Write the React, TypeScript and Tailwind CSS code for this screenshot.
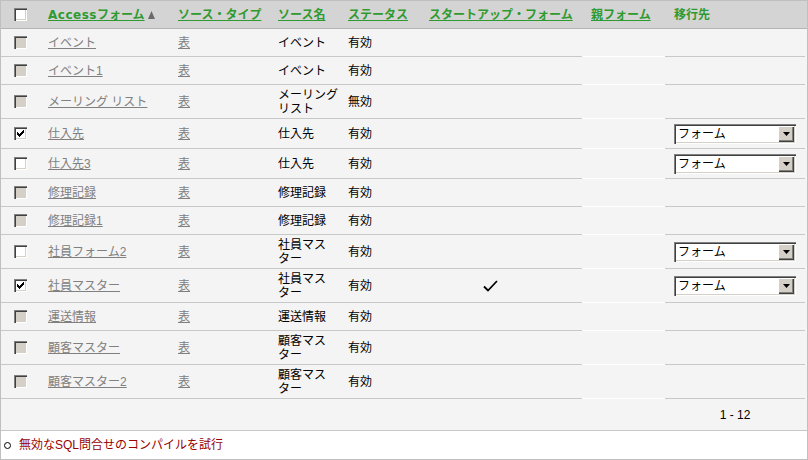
import React from 'react';

type Box = 'disabled' | 'off' | 'on';

type Row = {
  name: string;
  source: React.ReactNode;
  status: string;
  box: Box;
  h: string;
  select?: boolean;
  startup?: boolean;
};

const rows: Row[] = [
  { name: 'イベント', source: 'イベント', status: '有効', box: 'disabled', h: 'h-[28px]' },
  { name: 'イベント1', source: 'イベント', status: '有効', box: 'disabled', h: 'h-[28px]' },
  { name: 'メーリング リスト', source: <>メーリング<br />リスト</>, status: '無効', box: 'disabled', h: 'h-[34px]' },
  { name: '仕入先', source: '仕入先', status: '有効', box: 'on', h: 'h-[30px]', select: true },
  { name: '仕入先3', source: '仕入先', status: '有効', box: 'off', h: 'h-[30px]', select: true },
  { name: '修理記録', source: '修理記録', status: '有効', box: 'disabled', h: 'h-[28px]' },
  { name: '修理記録1', source: '修理記録', status: '有効', box: 'disabled', h: 'h-[28px]' },
  { name: '社員フォーム2', source: <>社員マス<br />ター</>, status: '有効', box: 'off', h: 'h-[34px]', select: true },
  { name: '社員マスター', source: <>社員マス<br />ター</>, status: '有効', box: 'on', h: 'h-[34px]', select: true, startup: true },
  { name: '運送情報', source: '運送情報', status: '有効', box: 'disabled', h: 'h-[28px]' },
  { name: '顧客マスター', source: <>顧客マス<br />ター</>, status: '有効', box: 'disabled', h: 'h-[34px]' },
  { name: '顧客マスター2', source: <>顧客マス<br />ター</>, status: '有効', box: 'disabled', h: 'h-[34px]' },
];

function CheckBox({ state }: { state: Box }) {
  return (
    <span
      className={`relative block w-[13px] h-[13px] shadow-[inset_1px_1px_0_#808080,inset_2px_2px_0_#404040,inset_-1px_-1px_0_#ffffff,inset_-2px_-2px_0_#d4d0c8] ${
        state === 'disabled' ? 'bg-[#d4d0c8]' : 'bg-white'
      }`}
    >
      {state === 'on' && (
        <svg className="absolute left-[3px] top-[3px]" width="7" height="7" viewBox="0 0 7 7">
          <path d="M0 2h1v1h1v1h1v-1h1v-1h1v-1h1v-1h1v3h-1v1h-1v1h-1v1h-1v1h-1v-1h-1v-1h-1z" fill="#000" />
        </svg>
      )}
    </span>
  );
}

function FormSelect() {
  return (
    <div className="flex items-center w-[122px] h-[20px] bg-white shadow-[inset_1px_1px_0_#808080,inset_2px_2px_0_#404040,inset_-1px_-1px_0_#ffffff,inset_-2px_-2px_0_#d4d0c8] pl-[4px] pr-[2px]">
      <span className="flex-1 text-[12px] leading-[14px] text-black">フォーム</span>
      <span className="flex items-center justify-center w-[16px] h-[16px] bg-[#d4d0c8] shadow-[inset_1px_1px_0_#ffffff,inset_-1px_-1px_0_#404040,inset_-2px_-2px_0_#808080]">
        <svg width="7" height="4" viewBox="0 0 7 4">
          <path d="M0 0h7l-3.5 4z" fill="#000" />
        </svg>
      </span>
    </div>
  );
}

const link = 'text-[#808080] underline';
const head = 'text-[#2f9a2f] font-bold';

export default function App() {
  return (
    <div
      className="w-[808px] h-[460px] border border-[#c0c0c0] bg-white text-[12px] leading-[14px] text-black"
      style={{ fontFamily: '"Liberation Sans", "Noto Sans CJK JP", sans-serif' }}
    >
      {/* Header */}
      <div className="flex h-[28px] bg-[#d4d4d4] border-b border-[#b4b4b4]">
        <div className="w-[37px] flex items-center pl-[13px]">
          <CheckBox state="off" />
        </div>
        <div className="w-[130px] flex items-center pl-[10px]">
          <span className={`${head} underline`}>
            <span className="font-['DejaVu_Sans'] tracking-[0.5px]">Access</span>フォーム
          </span>
          <svg className="ml-[3px]" width="7" height="8" viewBox="0 0 7 8">
            <path d="M3.5 0L7 8H0z" fill="#6b6b6b" />
          </svg>
        </div>
        <div className="w-[100px] flex items-center pl-[10px]">
          <span className={`${head} underline`}>ソース・タイプ</span>
        </div>
        <div className="w-[70px] flex items-center pl-[10px]">
          <span className={`${head} underline`}>ソース名</span>
        </div>
        <div className="w-[81px] flex items-center pl-[10px]">
          <span className={`${head} underline`}>ステータス</span>
        </div>
        <div className="w-[163px] flex items-center pl-[10px]">
          <span className={`${head} underline`}>スタートアップ・フォーム</span>
        </div>
        <div className="w-[83px] flex items-center pl-[9px]">
          <span className={`${head} underline`}>親フォーム</span>
        </div>
        <div className="w-[140px] flex items-center pl-[9px]">
          <span className={head}>移行先</span>
        </div>
      </div>

      {/* Rows */}
      {rows.map((r) => (
        <div key={r.name} className={`flex ${r.h} bg-[#f4f4f4]`}>
          <div className="w-[37px] flex items-center pl-[13px] border-b border-[#c8c8c8]">
            <CheckBox state={r.box} />
          </div>
          <div className="w-[130px] flex items-center pl-[10px] border-b border-[#c8c8c8]">
            <span className={link}>{r.name}</span>
          </div>
          <div className="w-[100px] flex items-center pl-[10px] border-b border-[#c8c8c8]">
            <span className={link}>表</span>
          </div>
          <div className="w-[70px] flex items-center pl-[10px] border-b border-[#c8c8c8]">
            <span>{r.source}</span>
          </div>
          <div className="w-[81px] flex items-center pl-[10px] border-b border-[#c8c8c8]">
            <span>{r.status}</span>
          </div>
          <div className="w-[163px] flex items-center pl-[64px] border-b border-[#c8c8c8]">
            {r.startup && (
              <svg width="15" height="12" viewBox="0 0 15 12">
                <path d="M1 6.5l4 4L14 1" stroke="#000" strokeWidth="1.8" fill="none" />
              </svg>
            )}
          </div>
          <div className="w-[83px] border-b border-white" />
          <div className="w-[140px] flex items-center pl-[9px] border-b border-[#c8c8c8]">
            {r.select && <FormSelect />}
          </div>
        </div>
      ))}

      {/* Pager */}
      <div className="flex h-[32px] bg-[#f4f4f4] border-b border-[#c8c8c8]">
        <div className="w-[664px]" />
        <div className="w-[140px] flex items-center justify-center">
          <span className="font-['Liberation_Sans']">1 - 12</span>
        </div>
      </div>

      {/* Note */}
      <div className="flex items-center h-[28px] pl-[3px]">
        <span className="w-[7px] h-[7px] rounded-full border border-black" />
        <span className="ml-[8px] text-[#990000]">無効なSQL問合せのコンパイルを試行</span>
      </div>
    </div>
  );
}
